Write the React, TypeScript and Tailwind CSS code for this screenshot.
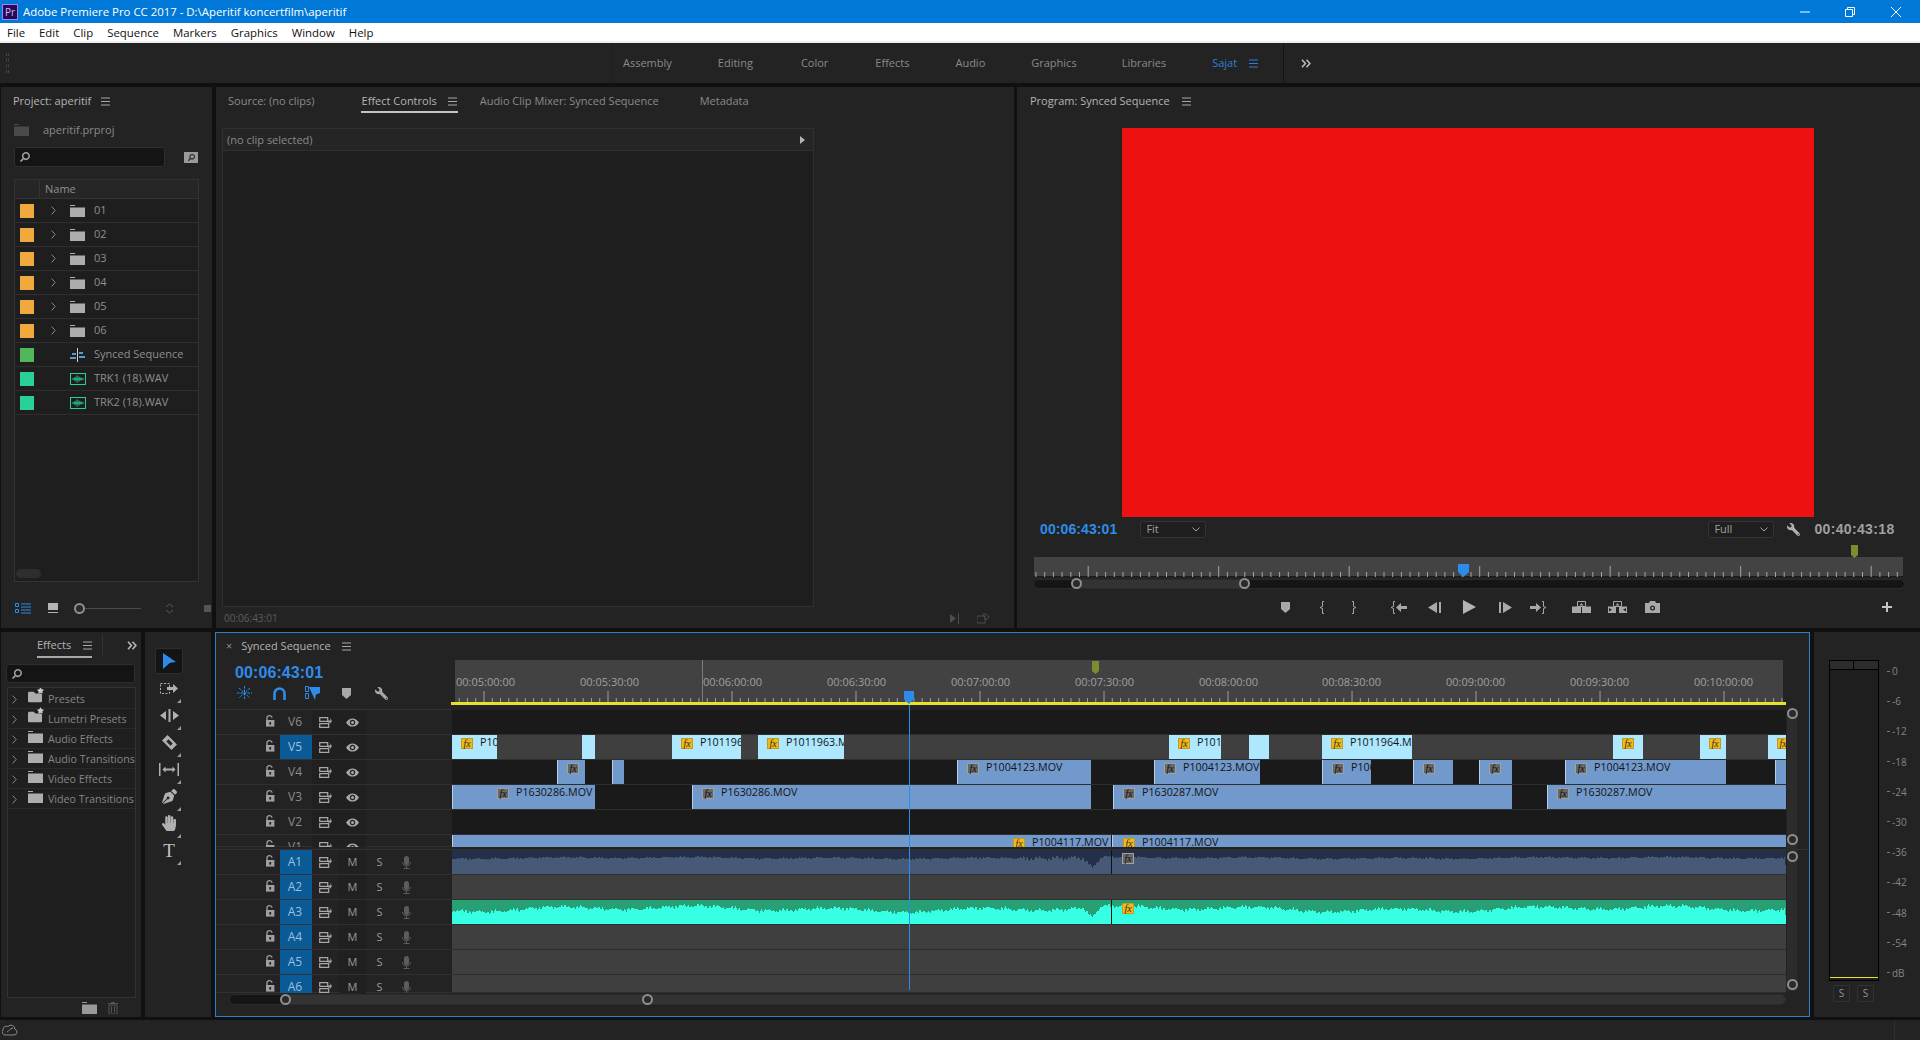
import React from 'react';
import { FaHandPaper, FaPenNib, FaWrench, FaSearch, FaFolder, FaStar } from 'react-icons/fa';

type Clip = {
  from: number;
  to: number;
  label?: string;
  fx?: 'yellow' | 'gray';
  fxAt?: number;
};

const LANE_X = 452;
const LANE_W = 1334;

const hamburger = (color = '#a8a8a8') => (
  <svg width="9" height="9" viewBox="0 0 9 9">
    <path d="M0 1h9M0 4.500h9M0 8h9" stroke={color} strokeWidth="1" />
  </svg>
);

const Lock = () => (
  <svg width="10" height="12" viewBox="0 0 10 12">
    <path d="M2 5V2.600C2 1.400 3 .7 4.400.7S7 1.500 7 2.700" fill="none" stroke="#a0a0a0" strokeWidth="1.300" />
    <rect x="1" y="5" width="8.400" height="6.600" fill="#a0a0a0" />
    <rect x="4.300" y="7" width="1.800" height="2.600" fill="#232323" />
  </svg>
);

const SyncLock = () => (
  <svg width="13" height="11" viewBox="0 0 13 11">
    <path d="M.7.700h8v3.600h-8zM.7 6.700h9v3.600h-9z" fill="none" stroke="#a8a8a8" strokeWidth="1.200" />
    <path d="M9 2.500h2.600V0L13 3l-1.400 3V4.500H9z" fill="#a8a8a8" transform="translate(-.2 1)" />
  </svg>
);

const Eye = () => (
  <svg width="13" height="9" viewBox="0 0 13 9">
    <path d="M0 4.500C2 1.400 4 .4 6.500.4S11 1.400 13 4.500C11 7.600 9 8.600 6.500 8.600S2 7.600 0 4.500z" fill="#a8a8a8" />
    <circle cx="6.500" cy="4.500" r="2.700" fill="#232323" />
    <circle cx="6.500" cy="4.500" r="1.500" fill="#a8a8a8" />
  </svg>
);

const Mic = () => (
  <svg width="9" height="13" viewBox="0 0 9 13">
    <rect x="2" y="0" width="5" height="9" rx="2.500" fill="#5c5c5c" />
    <path d="M.6 6c0 2.600 1.600 3.800 3.900 3.800S8.400 8.600 8.400 6M4.500 10v2M1.500 12.500h6" fill="none" stroke="#5c5c5c" />
  </svg>
);

const Marker = ({ color = '#a8a8a8' }: { color?: string }) => (
  <svg width="9" height="11" viewBox="0 0 9 11">
    <path d="M0 0h9v7L4.500 11 0 7z" fill={color} />
  </svg>
);

const Chevron = ({ color = '#8a8a8a' }: { color?: string }) => (
  <svg width="5" height="9" viewBox="0 0 5 9">
    <path d="M.6.600l3.600 3.900L.6 8.400" fill="none" stroke={color} strokeWidth="1" />
  </svg>
);

const DoubleChevron = () => (
  <svg width="10" height="9" viewBox="0 0 10 9">
    <path d="M1 .7l3.400 3.800L1 8.300M5.500.7l3.400 3.800-3.400 3.800" fill="none" stroke="#b8b8b8" strokeWidth="1.600" />
  </svg>
);

const Folder = ({ color = '#adadad' }: { color?: string }) => (
  <svg width="15" height="12" viewBox="0 0 15 12">
    <path d="M0 0h5v1H0zM0 2.500h15V12H0z" fill={color} />
  </svg>
);

const Ring = ({ size = 'w-[11px] h-[11px]' }: { size?: string }) => (
  <span className={`block ${size} rounded-full border-2 border-[#8e8e8e] bg-[#2a2a2a]`} />
);

const FxBadge = ({ kind }: { kind: 'yellow' | 'gray' }) => (
  <span
    className={
      kind === 'yellow'
        ? "flex h-[11px] w-[12px] items-center justify-center border border-[#c79a1c] bg-[#edb921] font-['Liberation_Serif'] text-[10px] italic leading-none text-[#3b2c05]"
        : "flex h-[11px] w-[12px] items-center justify-center border border-[#a0a0a0] bg-[#686868] font-['Liberation_Serif'] text-[10px] italic leading-none text-[#0c0c0c]"
    }
  >
    fx
  </span>
);

const v5Clips: Clip[] = [
  { from: 452, to: 497, label: 'P10', fx: 'yellow' },
  { from: 582, to: 595 },
  { from: 672, to: 741, label: 'P101196', fx: 'yellow' },
  { from: 758, to: 844, label: 'P1011963.M', fx: 'yellow' },
  { from: 1169, to: 1221, label: 'P101', fx: 'yellow' },
  { from: 1249, to: 1269 },
  { from: 1322, to: 1412, label: 'P1011964.M', fx: 'yellow' },
  { from: 1613, to: 1643, fx: 'yellow' },
  { from: 1700, to: 1726, fx: 'yellow' },
  { from: 1768, to: 1786, fx: 'yellow' },
];

const v4Clips: Clip[] = [
  { from: 557, to: 585, fx: 'gray' },
  { from: 612, to: 624 },
  { from: 957, to: 1091, label: 'P1004123.MOV', fx: 'gray' },
  { from: 1154, to: 1260, label: 'P1004123.MOV', fx: 'gray' },
  { from: 1322, to: 1371, label: 'P100', fx: 'gray' },
  { from: 1413, to: 1453, fx: 'gray' },
  { from: 1479, to: 1512, fx: 'gray' },
  { from: 1565, to: 1726, label: 'P1004123.MOV', fx: 'gray' },
  { from: 1775, to: 1786 },
];

const v3Clips: Clip[] = [
  { from: 452, to: 595, label: 'P1630286.MOV', fx: 'gray', fxAt: 496 },
  { from: 692, to: 1091, label: 'P1630286.MOV', fx: 'gray' },
  { from: 1113, to: 1512, label: 'P1630287.MOV', fx: 'gray' },
  { from: 1547, to: 1786, label: 'P1630287.MOV', fx: 'gray' },
];

const v1Clips: Clip[] = [
  { from: 452, to: 1111, label: 'P1004117.MOV', fx: 'yellow', fxAt: 1012 },
  { from: 1112, to: 1786, label: 'P1004117.MOV', fx: 'yellow', fxAt: 1122 },
];

const ClipBlock = ({ clip, light }: { clip: Clip; light?: boolean }) => {
  const badge = clip.fxAt ?? clip.from + 9;
  return (
    <div
      className={
        light
          ? 'absolute top-0 h-[24px] overflow-hidden bg-[#aee8ff]'
          : 'absolute top-0 h-[24px] overflow-hidden border-l border-[#b9cde8] bg-[#7199cc]'
      }
      style={{ left: clip.from - LANE_X, width: clip.to - clip.from }}
    >
      {clip.fx && (
        <span className="absolute top-[3px]" style={{ left: badge - clip.from }}>
          <FxBadge kind={clip.fx} />
        </span>
      )}
      {clip.label && (
        <span
          className="absolute top-0 whitespace-nowrap text-[10.700px] leading-[15px] text-[#141414]"
          style={{ left: badge - clip.from + 19 }}
        >
          {clip.label}
        </span>
      )}
    </div>
  );
};

const noise = (i: number) =>
  Math.sin(i * 1.7) * 0.5 + Math.sin(i * 0.37 + 1) * 0.6 + Math.sin(i * 4.3 + 2) * 0.55 + Math.sin(i * 11.1) * 0.5;

// both waveforms are drawn from the same noise, one pixel column at a time
const wavePath = (base: number, amp: number, dipAmp: number, spike: number, swell: number) => {
  let d = 'M0 24';
  for (let i = 0; i < LANE_W; i++) {
    const slow = (Math.sin(i * 0.045) * 0.6 + Math.sin(i * 0.013 + 2) * 0.5) * swell;
    const dist = Math.abs(i - 640);
    const dip = dist < 9 ? (9 - dist) * dipAmp : 0;
    const boost = i > 565 && i < 655 ? spike : 1;
    d += `L${i} ${(base + (noise(i) * boost + slow) * amp + dip).toFixed(1)}`;
  }
  return `${d}L${LANE_W} 24Z`;
};

const Waveform = ({
  dark,
  light,
  base,
  amp,
  dip,
  spike = 1,
  swell = 1,
}: {
  dark: string;
  light: string;
  base: number;
  amp: number;
  dip: number;
  spike?: number;
  swell?: number;
}) => (
  <svg width={LANE_W} height="24" className="absolute left-0 top-0" style={{ background: dark }}>
    <path d={wavePath(base, amp, dip, spike, swell)} fill={light} shapeRendering="crispEdges" />
    <rect x="659" y="0" width="1" height="24" fill="#111" />
  </svg>
);

const RowShell = ({ children, h = 'h-[25px]' }: { children: React.ReactNode; h?: string }) => (
  <div className={`flex ${h} overflow-hidden`}>{children}</div>
);

const VideoRow = ({
  name,
  target,
  laneClass,
  children,
  h,
}: {
  name: string;
  target?: boolean;
  laneClass: string;
  children?: React.ReactNode;
  h?: string;
}) => (
  <RowShell h={h}>
    <div className="flex w-[235px] shrink-0 items-start border-b border-[#313131] pl-[49px]">
      <span className="mt-[5px] w-[10px]">
        <Lock />
      </span>
      <span
        className={
          target
            ? 'ml-[5px] flex h-[24px] w-[32px] items-center justify-center bg-[#0a5a96] pr-[2px] text-[12px] text-[#9cc0de]'
            : 'ml-[5px] flex h-[24px] w-[32px] items-center justify-center pr-[2px] text-[12px] text-[#8c8c8c]'
        }
      >
        {name}
      </span>
      <span className="flex h-[24px] w-[27px] items-center justify-center bg-[#202020]">
        <SyncLock />
      </span>
      <span className="flex h-[24px] w-[27px] items-center justify-center bg-[#202020]">
        <Eye />
      </span>
    </div>
    <div className={`relative ml-px w-[1334px] border-b border-[#2e2e2e] ${laneClass}`}>{children}</div>
  </RowShell>
);

const AudioRow = ({ name, children, h }: { name: string; children?: React.ReactNode; h?: string }) => (
  <RowShell h={h}>
    <div className="flex w-[235px] shrink-0 items-start border-b border-[#313131] pl-[49px]">
      <span className="mt-[5px] w-[10px]">
        <Lock />
      </span>
      <span className="ml-[5px] flex h-[24px] w-[32px] items-center justify-center bg-[#0a5a96] pr-[2px] text-[12px] text-[#9cc0de]">
        {name}
      </span>
      <span className="flex h-[24px] w-[27px] items-center justify-center">
        <SyncLock />
      </span>
      <span className="flex h-[24px] w-[27px] items-center justify-center bg-[#202020] text-[11px] text-[#9a9a9a]">M</span>
      <span className="flex h-[24px] w-[27px] items-center justify-center text-[11px] text-[#9a9a9a]">S</span>
      <span className="flex h-[24px] w-[27px] items-center justify-center">
        <Mic />
      </span>
    </div>
    <div className="relative ml-px w-[1334px] border-b border-[#2e2e2e] bg-[#3f3f3f]">{children}</div>
  </RowShell>
);

const TimelineRuler = () => {
  const ticks: React.ReactNode[] = [];
  for (let i = -3; i < 163; i++) {
    const x = 33 + i * 8.267;
    if (x < 4 || x > 1332) continue;
    const major = (i + 150) % 15 === 0;
    ticks.push(<line key={i} x1={x} x2={x} y1={major ? 31 : 38} y2="43" stroke="#9d9d9d" />);
  }
  return (
    <svg width="1335" height="43" className="absolute left-0 top-0">
      {ticks}
      <line x1="251.500" x2="251.500" y1="0" y2="43" stroke="#7c7c7c" />
    </svg>
  );
};

const ProgramRuler = () => {
  const ticks: React.ReactNode[] = [];
  for (let i = 0; i < 100; i++) {
    const x = 2 + i * 8.7;
    const major = i % 15 === 6;
    ticks.push(<line key={i} x1={x} x2={x} y1={major ? 9 : 15} y2="20" stroke="#a5a5a5" />);
  }
  return (
    <svg width="869" height="20" className="absolute left-0 top-0">
      {ticks}
    </svg>
  );
};

const rulerLabels = [
  ['00:05:00:00', 456],
  ['00:05:30:00', 580],
  ['00:06:00:00', 703],
  ['00:06:30:00', 827],
  ['00:07:00:00', 951],
  ['00:07:30:00', 1075],
  ['00:08:00:00', 1199],
  ['00:08:30:00', 1322],
  ['00:09:00:00', 1446],
  ['00:09:30:00', 1570],
  ['00:10:00:00', 1694],
] as const;

const dbLabels = ['0', '-6', '-12', '-18', '-24', '-30', '-36', '-42', '-48', '-54', 'dB'];

const projectRows = [
  { name: '01', color: 'bg-[#f0a93c]', folder: true },
  { name: '02', color: 'bg-[#f0a93c]', folder: true },
  { name: '03', color: 'bg-[#f0a93c]', folder: true },
  { name: '04', color: 'bg-[#f0a93c]', folder: true },
  { name: '05', color: 'bg-[#f0a93c]', folder: true },
  { name: '06', color: 'bg-[#f0a93c]', folder: true },
  { name: 'Synced Sequence', color: 'bg-[#4fb85c]', seq: true },
  { name: 'TRK1 (18).WAV', color: 'bg-[#2ad196]' },
  { name: 'TRK2 (18).WAV', color: 'bg-[#2ad196]' },
];

const effectRows = [
  { name: 'Presets', star: true },
  { name: 'Lumetri Presets', star: true },
  { name: 'Audio Effects' },
  { name: 'Audio Transitions' },
  { name: 'Video Effects' },
  { name: 'Video Transitions' },
];

const tIcon = '#a8a8a8';

const transport = [
  { ml: 'ml-[256px]', icon: <Marker /> },
  { ml: 'ml-[13px]', icon: <svg width="6" height="13" viewBox="0 0 6 13"><path d="M5 .5H3.500v5L1 6.500l2.500 1v5H5" fill="none" stroke={tIcon} /></svg> },
  { ml: 'ml-[8px]', icon: <svg width="6" height="13" viewBox="0 0 6 13"><path d="M1 .5h1.500v5L5 6.500l-2.500 1v5H1" fill="none" stroke={tIcon} /></svg> },
  { ml: 'ml-[21px]', icon: <svg width="16" height="13" viewBox="0 0 16 13"><path d="M4 .5H2.500v5L0 6.500l2.500 1v5H4" fill="none" stroke={tIcon} /><path d="M5 6.500L10 2v3h6v3h-6v3z" fill={tIcon} /></svg> },
  { ml: 'ml-[11px]', icon: <svg width="13" height="11" viewBox="0 0 13 11"><path d="M0 5.500L9 0v11zM11 0h2v11h-2z" fill={tIcon} /></svg> },
  { ml: 'ml-[11px]', icon: <svg width="13" height="14" viewBox="0 0 13 14"><path d="M0 0l13 7-13 7z" fill="#b4b4b4" /></svg> },
  { ml: 'ml-[12px]', icon: <svg width="13" height="11" viewBox="0 0 13 11"><path d="M13 5.500L4 0v11zM0 0h2v11H0z" fill={tIcon} /></svg> },
  { ml: 'ml-[9px]', icon: <svg width="16" height="13" viewBox="0 0 16 13"><path d="M12 .5h1.500v5L16 6.500l-2.500 1v5H12" fill="none" stroke={tIcon} /><path d="M11 6.500L6 2v3H0v3h6v3z" fill={tIcon} /></svg> },
  {
    ml: 'ml-[19px]',
    icon: (
      <svg width="19" height="12" viewBox="0 0 19 12">
        <path d="M5.500.5h8v5h-8z" fill="none" stroke={tIcon} />
        <path d="M7.500 4.500l2-2.500 2 2.500zM0 5.500h9v6.500H0zM10 5.500h9v6.500h-9z" fill={tIcon} />
      </svg>
    ),
  },
  {
    ml: 'ml-[12px]',
    icon: (
      <svg width="19" height="12" viewBox="0 0 19 12">
        <path d="M5.500.5h8v5h-8z" fill="none" stroke={tIcon} />
        <path d="M7.500 4.500l2-2.500 2 2.500zM0 5.500h8v6.500H0zM11 5.500h8v6.500h-8z" fill={tIcon} />
        <path d="M1 7l3 1.800-3 1.800zM18 7l-3 1.800 3 1.800z" fill="#232323" />
      </svg>
    ),
  },
  { ml: 'ml-[11px]', icon: <svg width="15" height="12" viewBox="0 0 15 12"><path d="M0 2h4l1-2h5l1 2h4v10H0z" fill={tIcon} /><circle cx="7.500" cy="7" r="2.500" fill="#232323" /><circle cx="7.500" cy="7" r="1.200" fill={tIcon} /></svg> },
  { ml: 'ml-[211px]', icon: <svg width="10" height="10" viewBox="0 0 10 10"><path d="M4 0h2v4h4v2H6v4H4V6H0V4h4z" fill="#c4c4c4" /></svg> },
];

const toolDots = <span className="absolute bottom-[-2px] right-[-2px] h-0 w-0 border-b-[4px] border-l-[4px] border-b-[#9c9c9c] border-l-transparent" />;

const tools = [
  <svg key="t1" width="18" height="18" viewBox="0 0 18 18"><path d="M3 1l13 9-6 .8L3 17z" fill="#2d8ceb" /></svg>,
  <svg key="t2" width="18" height="11" viewBox="0 0 18 11"><rect x=".5" y=".5" width="9" height="10" fill="none" stroke="#b0b0b0" strokeDasharray="2 1.500" /><path d="M7 4h6V1l5 4.500-5 4.500V7H7z" fill="#b0b0b0" /></svg>,
  <svg key="t3" width="19" height="13" viewBox="0 0 19 13"><path d="M0 6.500L6 2v9zM19 6.500L13 2v9zM8.500 0h2v13h-2z" fill="#b0b0b0" /></svg>,
  <svg key="t4" width="15" height="15" viewBox="0 0 15 15"><path d="M5.500 0L15 9.500 9.500 15 0 5.500z" fill="#b0b0b0" /><rect x="4.500" y="6" width="6" height="3" transform="rotate(45 7.500 7.500)" fill="#232323" /></svg>,
  <svg key="t5" width="20" height="13" viewBox="0 0 20 13"><path d="M0 0h1.500v13H0zM18.500 0H20v13h-1.500z" fill="#b0b0b0" /><path d="M3.500 6.500l3-3v2h7v-2l3 3-3 3v-2h-7v2z" fill="#b0b0b0" /></svg>,
  <FaPenNib key="t6" className="text-[15px] text-[#b0b0b0]" />,
  <FaHandPaper key="t7" className="text-[16px] text-[#b0b0b0]" />,
  <span key="t8" className="font-['Liberation_Serif'] text-[19px] leading-none text-[#c4c4c4]">T</span>,
];

const menuItems = ['File', 'Edit', 'Clip', 'Sequence', 'Markers', 'Graphics', 'Window', 'Help'];
const workspaces = [
  ['Assembly', 'ml-[0px]'],
  ['Editing', 'ml-[46px]'],
  ['Color', 'ml-[48px]'],
  ['Effects', 'ml-[47px]'],
  ['Audio', 'ml-[46px]'],
  ['Graphics', 'ml-[46px]'],
  ['Libraries', 'ml-[45px]'],
];

export default function App() {
  return (
    <div className="flex h-[1040px] w-[1920px] flex-col overflow-hidden bg-[#101010] font-['Open_Sans',sans-serif] text-[11px] text-[#8f8f8f]">
      {/* title bar */}
      <div className="flex h-[23px] shrink-0 items-center bg-[#0078d7] pl-[2px] pr-[23px] text-white">
        <span className="flex h-[16px] w-[16px] items-center justify-center border border-[#9a86ff] bg-[#2b0a55] text-[10px] leading-none text-[#c9b8ff]">
          Pr
        </span>
        <span className="ml-[5px] text-[11.400px]">Adobe Premiere Pro CC 2017 - D:\Aperitif koncertfilm\aperitif</span>
        <svg className="ml-auto" width="97" height="12" viewBox="0 0 97 12" overflow="visible">
          <path d="M0 6h10" stroke="#fff" />
          <path d="M45.500 3.500h7v7h-7zM47.500 3V1.500h7v7H53" fill="none" stroke="#fff" />
          <path d="M91 1l10 10M101 1L91 11" stroke="#fff" />
        </svg>
      </div>
      {/* menu */}
      <div className="flex h-[20px] shrink-0 items-start gap-[14px] border-b-2 border-[#efefef] bg-white pl-[7px] pt-[1px] text-[11.400px] leading-[17px] text-[#111]">
        {menuItems.map((m) => (
          <span key={m}>{m}</span>
        ))}
      </div>
      {/* workspaces */}
      <div className="flex h-[40px] shrink-0 items-center bg-[#232323] pl-[6px]">
        <span className="h-[20px] w-[3px] border-x border-dashed border-[#444]" />
        <span className="ml-[602px] h-full w-px bg-[#1d1d1d]" />
        <span className="ml-[11px] flex text-[11px] text-[#8a8a8a]">
          {workspaces.map(([w, ml]) => (
            <span key={w} className={ml}>
              {w}
            </span>
          ))}
        </span>
        <span className="ml-[46px] text-[#2d7fd4]">Sajat</span>
        <span className="ml-[12px]">{hamburger('#2d7fd4')}</span>
        <span className="ml-[25px] h-full w-px bg-[#151515]" />
        <span className="ml-[17px]">
          <DoubleChevron />
        </span>
      </div>

      {/* top panels */}
      <div className="mt-[4px] flex h-[541px] shrink-0 pl-px">
        {/* project */}
        <div className="flex w-[211px] flex-col bg-[#232323]">
          <div className="flex h-[28px] items-center pl-[12px] text-[#b4b4b4]">
            Project: aperitif<span className="ml-[10px]">{hamburger()}</span>
          </div>
          <div className="flex h-[32px] items-center pl-[13px] pb-[2px]">
            <Folder color="#4a4a4a" />
            <span className="ml-[14px] text-[#8a8a8a]">aperitif.prproj</span>
          </div>
          <div className="flex h-[20px] items-center pl-[13px]">
            <div className="flex h-[20px] w-[151px] items-center rounded-[3px] border border-[#2e2e2e] bg-[#141414] pl-[5px]">
              <FaSearch className="scale-x-[-1] text-[10px] text-[#a0a0a0]" />
            </div>
            <span className="ml-[19px] flex h-[11px] w-[14px] items-center justify-center bg-[#9a9a9a]">
              <FaSearch className="scale-x-[-1] text-[7px] text-[#232323]" />
            </span>
          </div>
          <div className="mx-[13px] mt-[12px] flex h-[403px] flex-col overflow-hidden border border-[#333] bg-[#1e1e1e]">
            <div className="flex h-[19px] shrink-0 items-center border-b border-[#333] bg-[#262626]">
              <span className="h-full w-[25px] border-r border-[#333]" />
              <span className="ml-[5px]">Name</span>
            </div>
            {projectRows.map((r) => (
              <div key={r.name} className="flex h-[24px] shrink-0 items-center border-b border-[#2f2f2f]">
                <span className={`ml-[5px] h-[14px] w-[14px] ${r.color}`} />
                <span className="ml-[17px] flex w-[19px]">{r.folder && <Chevron />}</span>
                <span className="flex w-[24px]">
                  {r.folder && <Folder />}
                  {r.seq && (
                    <svg width="15" height="14" viewBox="0 0 15 14">
                      <path d="M7 0h1v14H7z" fill="#d0d0d0" />
                      <path d="M2 5h4v2H2zM0 9h6v2H0zM9 4h4v2H9zM9 8h6v2H9z" fill="#5b9ac8" />
                    </svg>
                  )}
                  {!r.folder && !r.seq && (
                    <svg width="16" height="12" viewBox="0 0 16 12">
                      <rect x=".5" y=".5" width="15" height="11" fill="none" stroke="#2ad196" />
                      <path d="M2 6h12M5 4v4M7 2.500v7M9 3.500v5M11 4.500v3" stroke="#2ad196" />
                    </svg>
                  )}
                </span>
                <span className="text-[#8f8f8f]">{r.name}</span>
              </div>
            ))}
            <span className="ml-[1px] mt-auto mb-[3px] h-[9px] w-[25px] rounded-full bg-[#2e2e2e]" />
          </div>
          <div className="mt-[19px] flex h-[14px] items-center pl-[14px]">
            <svg width="16" height="11" viewBox="0 0 16 11">
              <path d="M.5.500h3v3h-3zM.5 6.500h3v3h-3zM6 1h10M6 4h10M6 7h10M6 10h10" fill="none" stroke="#2d8ceb" />
            </svg>
            <svg className="ml-[17px]" width="10" height="10" viewBox="0 0 10 10">
              <path d="M0 0h10v7H0zM0 9h10v1H0z" fill="#b4b4b4" />
            </svg>
            <span className="ml-[16px]">
              <Ring />
            </span>
            <span className="h-px w-[56px] bg-[#4c4c4c]" />
            <svg className="ml-[24px]" width="9" height="11" viewBox="0 0 9 11">
              <path d="M1 4l3.500-3L8 4M1 7l3.500 3L8 7" fill="none" stroke="#5a5a5a" />
            </svg>
            <span className="ml-[30px] h-[7px] w-[7px] bg-[#555]" />
          </div>
        </div>

        <div className="w-[4px]" />

        {/* effect controls */}
        <div className="flex w-[798px] flex-col bg-[#232323]">
          <div className="flex h-[26px] items-center text-[#8a8a8a]">
            <span className="ml-[12px] pt-[2px]">Source: (no clips)</span>
            <span className="ml-[46px] flex h-[26px] items-center border-b-2 border-[#c4c4c4] px-px pt-[4px] text-[#b4b4b4]">
              Effect Controls<span className="ml-[11px]">{hamburger()}</span>
            </span>
            <span className="ml-[22px] pt-[2px]">Audio Clip Mixer: Synced Sequence</span>
            <span className="ml-[41px] pt-[2px]">Metadata</span>
          </div>
          <div className="ml-[6px] mt-[15px] flex h-[479px] w-[592px] flex-col border border-[#303030] bg-[#1e1e1e]">
            <div className="flex h-[22px] items-center justify-between border-b border-[#303030] bg-[#252525] pl-[4px] pr-[8px] pt-px text-[#8a8a8a]">
              (no clip selected)
              <svg width="5" height="8" viewBox="0 0 5 8">
                <path d="M0 0l5 4-5 4z" fill="#b4b4b4" />
              </svg>
            </div>
          </div>
          <div className="mt-[3px] flex h-[16px] items-center text-[10px] text-[#5e5e5e]">
            <span className="ml-[8px]">00:06:43:01</span>
            <svg className="ml-[672px]" width="13" height="11" viewBox="0 0 13 11">
              <path d="M0 1l6 4.500L0 10zM8 0h1v11H8z" fill="#4c4c4c" />
            </svg>
            <svg className="ml-[14px]" width="13" height="11" viewBox="0 0 13 11">
              <path d="M0 3h8v7H0zM6 1h3l3 3-3 3z" fill="none" stroke="#4c4c4c" />
            </svg>
          </div>
        </div>

        <div className="w-[3px]" />

        {/* program monitor */}
        <div className="flex w-[903px] flex-col bg-[#232323]">
          <div className="flex h-[28px] items-center pl-[13px] text-[#b4b4b4]">
            Program: Synced Sequence<span className="ml-[12px]">{hamburger()}</span>
          </div>
          <div className="ml-[105px] mt-[13px] h-[389px] w-[692px] shrink-0 bg-[#ee1111]" />
          <div className="mt-[4px] flex h-[17px] items-center">
            <span className="ml-[23px] font-['Liberation_Sans'] text-[14px] font-bold tracking-[0.1px] text-[#2d8ceb]">00:06:43:01</span>
            <span className="ml-[23px] flex h-[17px] w-[66px] items-center justify-between rounded-[2px] border border-[#333] bg-[#1f1f1f] px-[5px] text-[#a0a0a0]">
              Fit
              <svg width="8" height="5" viewBox="0 0 8 5">
                <path d="M.5.500L4 4 7.500.500" fill="none" stroke="#a0a0a0" />
              </svg>
            </span>
            <span className="ml-[502px] flex h-[17px] w-[66px] items-center justify-between rounded-[2px] border border-[#333] bg-[#1f1f1f] px-[5px] text-[#a0a0a0]">
              Full
              <svg width="8" height="5" viewBox="0 0 8 5">
                <path d="M.5.500L4 4 7.500.500" fill="none" stroke="#a0a0a0" />
              </svg>
            </span>
            <FaWrench className="ml-[13px] scale-x-[-1] text-[13px] text-[#b0b0b0]" />
            <span className="ml-[14px] font-['Liberation_Sans'] text-[14px] font-bold tracking-[0.35px] text-[#a0a0a0]">00:40:43:18</span>
          </div>
          <div className="relative ml-[17px] mt-[19px] h-[20px] w-[869px] border-b border-[#1b1b1b] bg-[#434343]">
            <ProgramRuler />
            <svg className="absolute left-[817px] top-[-12px]" width="8" height="13" viewBox="0 0 8 13">
              <path d="M0 0h7v10l-3.500 3L0 10z" fill="#7c8c2f" />
            </svg>
            <svg className="absolute left-[424px] top-[7px]" width="11" height="13" viewBox="0 0 11 13">
              <path d="M0 0h11v8l-5.500 5L0 8z" fill="#2d8ceb" />
            </svg>
          </div>
          <div className="relative ml-[16px] mt-[2px] h-[10px] w-[872px] rounded-full border border-[#2b2b2b] bg-[#151515]">
            <span className="absolute left-[42px] top-0 h-[8px] w-[168px] bg-[#333]" />
            <span className="absolute left-[37px] top-[-2px]">
              <Ring />
            </span>
            <span className="absolute left-[205px] top-[-2px]">
              <Ring />
            </span>
          </div>
          <div className="mt-[11px] flex h-[14px] items-center">
            {transport.map((t, i) => (
              <span key={i} className={`flex w-[24px] justify-center ${t.ml}`}>
                {t.icon}
              </span>
            ))}
          </div>
        </div>
      </div>

      {/* bottom panels */}
      <div className="mt-[4px] flex h-[385px] shrink-0 pl-px">
        {/* effects */}
        <div className="flex w-[140px] flex-col bg-[#232323]">
          <div className="relative flex h-[26px] items-center pl-[36px] text-[#b4b4b4]">
            <span className="flex h-[26px] w-[55px] items-center border-b-2 border-[#a8a8a8] pt-[2px]">
              Effects<span className="ml-[12px]">{hamburger()}</span>
            </span>
            <span className="ml-[10px] h-[20px] w-px bg-[#333]" />
            <span className="ml-[24px]">
              <DoubleChevron />
            </span>
          </div>
          <div className="ml-[5px] mt-[6px] flex h-[19px] w-[129px] items-center rounded-[3px] border border-[#2e2e2e] bg-[#141414] pl-[5px]">
            <FaSearch className="scale-x-[-1] text-[10px] text-[#a0a0a0]" />
          </div>
          <div className="ml-[6px] mt-[4px] flex h-[311px] w-[129px] flex-col overflow-hidden border border-[#333] bg-[#1f1f1f] pt-px">
            {effectRows.map((r) => (
              <div key={r.name} className="flex h-[20px] shrink-0 items-center whitespace-nowrap border-b border-[#2a2a2a] pt-[2px]">
                <span className="ml-[4px] flex w-[16px]">
                  <Chevron />
                </span>
                <span className="relative mb-[5px] flex w-[20px]">
                  {r.star ? (
                    <>
                      <FaFolder className="text-[14px] text-[#adadad]" />
                      <FaStar className="absolute left-[9px] top-[-3px] text-[7px] text-[#c8c8c8]" />
                    </>
                  ) : (
                    <Folder />
                  )}
                </span>
                <span className="text-[10.700px] text-[#858585]">{r.name}</span>
              </div>
            ))}
          </div>
          <div className="mt-[4px] flex items-center">
            <span className="ml-[81px]">
              <Folder color="#9a9a9a" />
            </span>
            <svg className="ml-[11px]" width="10" height="12" viewBox="0 0 10 12">
              <path d="M0 1.500h10M3.500 1.500V.5h3v1M1 3h8v9H1zM3.500 4.500v6M6.500 4.500v6" fill="none" stroke="#555" />
            </svg>
          </div>
        </div>

        <div className="w-[4px]" />

        {/* tools */}
        <div className="flex w-[66px] flex-col items-center bg-[#232323] pr-[18px] pt-[16px]">
          {tools.map((t, i) => (
            <span
              key={i}
              className={
                i === 0
                  ? 'flex h-[26px] w-[28px] items-center justify-center rounded-[3px] border border-[#2e2e2e] bg-[#141414]'
                  : 'relative mt-[1px] flex h-[26px] w-[20px] items-center justify-center'
              }
            >
              {t}
              {i > 0 && toolDots}
            </span>
          ))}
        </div>

        <div className="w-[4px]" />

        {/* timeline */}
        <div className="relative flex w-[1595px] flex-col border border-[#2f7fd0] bg-[#232323]">
          <div className="flex h-[27px] shrink-0 items-center pl-[10px] text-[#b4b4b4]">
            <span className="text-[#8a8a8a]">×</span>
            <span className="ml-[9px]">Synced Sequence</span>
            <span className="ml-[11px]">{hamburger()}</span>
          </div>
          <div className="flex h-[50px] shrink-0">
            <div className="flex w-[235px] shrink-0 flex-col border-b border-[#333] pl-[19px] pt-[2px]">
              <span className="font-['Liberation_Sans'] text-[16px] font-bold leading-[22px] tracking-[0.1px] text-[#2d8ceb]">00:06:43:01</span>
              <div className="mt-[2px] flex h-[14px] items-center">
                <svg className="ml-[2px]" width="15" height="14" viewBox="0 0 15 14">
                  <path d="M7.500 0v14M0 7h15M2 2l11 10M13 2L2 12" stroke="#2d8ceb" strokeDasharray="2.500 1" />
                </svg>
                <svg className="ml-[21px]" width="13" height="13" viewBox="0 0 13 13">
                  <path d="M1.500 13V6.500a5 5 0 0 1 10 0V13" fill="none" stroke="#2d8ceb" strokeWidth="2.600" />
                </svg>
                <svg className="ml-[19px]" width="15" height="14" viewBox="0 0 15 14">
                  <path d="M4 1h11v6l-4 1.500L10 14z" fill="#2d8ceb" />
                  <path d="M.5.500h3v5h-3zM.5 7.500h3v5h-3z" fill="none" stroke="#2d8ceb" />
                </svg>
                <span className="ml-[22px]">
                  <Marker />
                </span>
                <FaWrench className="ml-[24px] scale-x-[-1] text-[13px] text-[#a8a8a8]" />
              </div>
            </div>
            <div className="relative w-[1336px]">
              <div className="absolute left-[4px] top-0 h-[43px] w-[1328px] bg-[#424242]" />
              <TimelineRuler />
              {rulerLabels.map(([label, x]) => (
                <span key={label} className="absolute top-[14px] text-[11px] leading-[15px] text-[#a0a0a0]" style={{ left: x - 451 }}>
                  {label}
                </span>
              ))}
              <svg className="absolute left-[641px] top-[1px]" width="8" height="13" viewBox="0 0 8 13">
                <path d="M0 0h7v10l-3.500 3L0 10z" fill="#7c8c2f" />
              </svg>
              <span className="absolute left-0 top-[42px] h-[3px] w-[1335px] bg-[#e7e32c]" />
              <svg className="absolute left-[453px] top-[31px] z-10" width="10" height="13" viewBox="0 0 10 13">
                <path d="M0 0h10v8l-5 5-5-5z" fill="#2d8ceb" />
              </svg>
            </div>
          </div>

          {/* tracks */}
          <div className="flex flex-col">
            <VideoRow name="V6" laneClass="bg-[#1a1a1a]" />
            <VideoRow name="V5" target laneClass="bg-[#3f3f3f]">
              {v5Clips.map((c) => (
                <ClipBlock key={c.from} clip={c} light />
              ))}
            </VideoRow>
            <VideoRow name="V4" laneClass="bg-[#1a1a1a]">
              {v4Clips.map((c) => (
                <ClipBlock key={c.from} clip={c} />
              ))}
            </VideoRow>
            <VideoRow name="V3" laneClass="bg-[#1a1a1a]">
              {v3Clips.map((c) => (
                <ClipBlock key={c.from} clip={c} />
              ))}
            </VideoRow>
            <VideoRow name="V2" laneClass="bg-[#1a1a1a]" />
            <VideoRow name="V1" h="h-[12px]" laneClass="bg-[#1a1a1a]">
              {v1Clips.map((c) => (
                <ClipBlock key={c.from} clip={c} />
              ))}
            </VideoRow>
            <div className="h-[3px] border-b border-[#313131]" />
            <AudioRow name="A1">
              <Waveform dark="#24304a" light="#465a78" base={8} amp={0.9} dip={1.2} spike={2.5} />
              <span className="absolute left-[670px] top-[3px]">
                <FxBadge kind="gray" />
              </span>
            </AudioRow>
            <AudioRow name="A2" />
            <AudioRow name="A3">
              <Waveform dark="#26a074" light="#37ffe3" base={9} amp={1.7} dip={1.2} swell={1.8} />
              <span className="absolute left-[670px] top-[3px]">
                <FxBadge kind="yellow" />
              </span>
            </AudioRow>
            <AudioRow name="A4" />
            <AudioRow name="A5" />
            <AudioRow name="A6" h="h-[18px]" />
          </div>

          {/* horizontal zoom bar */}
          <div className="relative ml-[13px] mt-px h-[11px] w-[1557px] rounded-full border border-[#2b2b2b] bg-[#333]">
            <span className="absolute left-0 top-0 h-[9px] w-[56px] rounded-l-full bg-[#151515]" />
            <span className="absolute left-[50px] top-[-1px]">
              <Ring />
            </span>
            <span className="absolute left-[412px] top-[-1px]">
              <Ring />
            </span>
          </div>

          {/* things lying over the track area */}
          <span className="absolute left-[693px] top-[72px] h-[285px] w-px bg-[#2d8ceb]" />
          <span className="absolute left-[1571px] top-[78px] h-[280px] w-[10px] bg-[#2c2c2c]" />
          <span className="absolute left-[1571px] top-[75px]">
            <Ring />
          </span>
          <span className="absolute left-[1571px] top-[201px]">
            <Ring />
          </span>
          <span className="absolute left-[1571px] top-[218px]">
            <Ring />
          </span>
          <span className="absolute left-[1571px] top-[346px]">
            <Ring />
          </span>
        </div>

        <div className="w-[4px]" />

        {/* audio meter */}
        <div className="flex w-[106px] bg-[#232323] pl-[15px] pt-[28px]">
          <div>
            <div className="flex h-[321px] w-[50px] flex-col border border-black bg-[#1e1e1e]">
              <div className="flex h-[9px] border-b border-black bg-[#2c2c2c]">
                <span className="w-1/2 border-r border-black" />
              </div>
              <span className="mt-auto mb-[2px] h-[1px] bg-[#e7e32c]" />
            </div>
            <div className="mt-[4px] flex gap-[7px] pl-[4px]">
              <span className="flex h-[17px] w-[17px] items-center justify-center rounded-[2px] border border-[#333] text-[10px]">S</span>
              <span className="flex h-[17px] w-[17px] items-center justify-center rounded-[2px] border border-[#333] text-[10px]">S</span>
            </div>
          </div>
          <div className="ml-[2px] mt-[4px] flex h-[316px] w-[36px] flex-col justify-between pl-[6px] text-[10px] leading-[14px] text-[#858585]">
            {dbLabels.map((d) => (
              <span key={d} className="flex items-center">
                <span className="mr-[2px] h-px w-[3px] bg-[#777]" />
                {d}
              </span>
            ))}
          </div>
        </div>
      </div>

      {/* status */}
      <div className="mt-[3px] flex h-[20px] shrink-0 items-center bg-[#232323] pl-[2px]">
        <svg width="16" height="12" viewBox="0 0 16 12">
          <path d="M3 11h9a3 3 0 0 0 1-5.800A4 4 0 0 0 6 2.500 3.500 3.500 0 0 0 1 6a3 3 0 0 0 2 5zM5 8c1.500 0 3-4 6-4" fill="none" stroke="#8a8a8a" />
        </svg>
        <span className="ml-[1876px] h-full w-px bg-[#2e2e2e]" />
      </div>
    </div>
  );
}
